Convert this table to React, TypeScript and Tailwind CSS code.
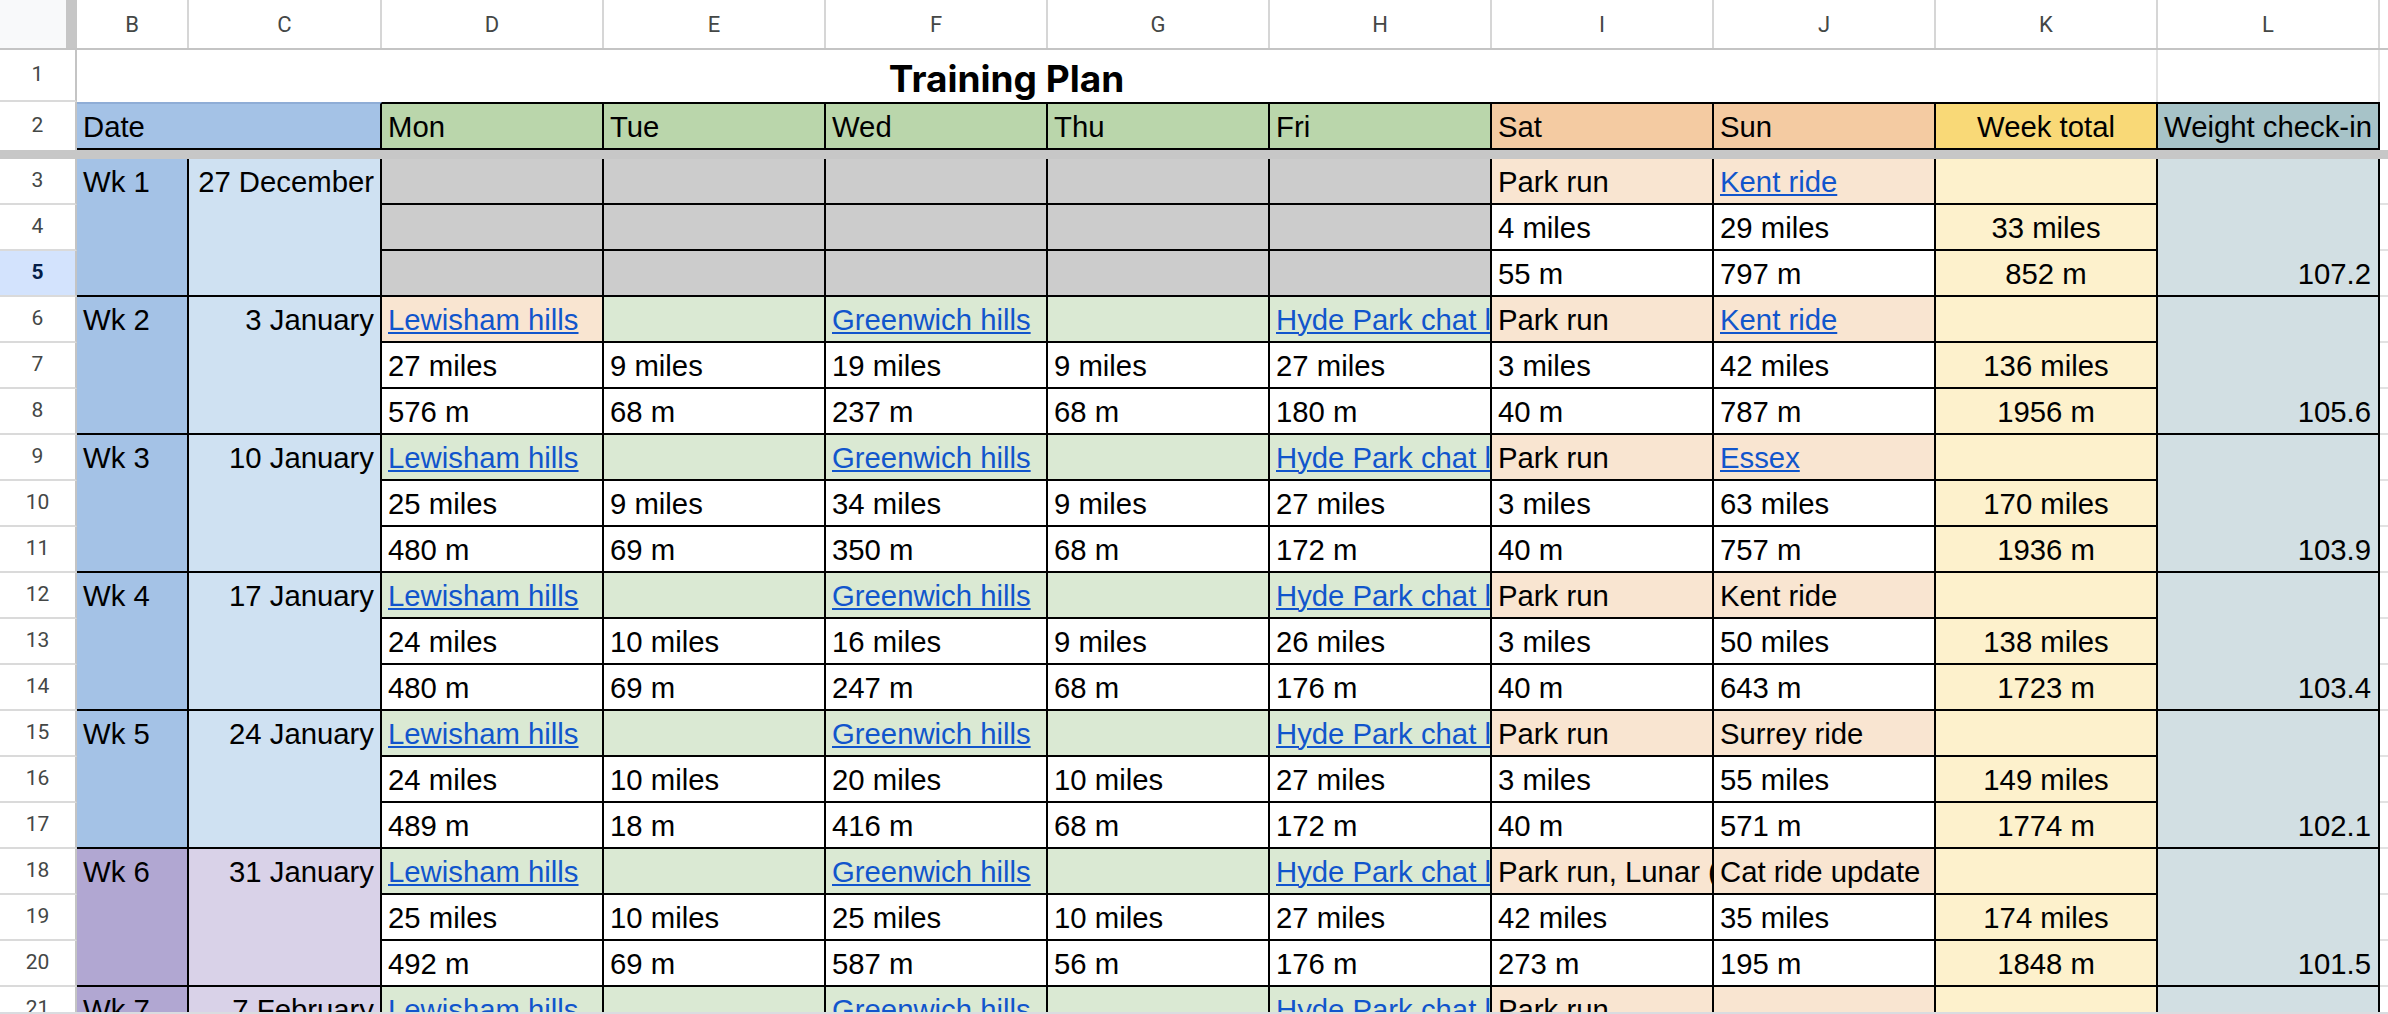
const G = 'bg-[#dae9d3]'
const P = 'bg-[#f9e5d1]'
const W = 'bg-white'
const GR = 'bg-[#cccccc]'

type Act = { t: string; link?: boolean; bg: string }
type Week = {
  row: number
  wk: string
  date: string
  purple?: boolean
  gray?: boolean
  acts: Act[]
  miles: string[]
  metres: string[]
  total: [string, string]
  weight: string
}

const blank = (bg: string): Act => ({ t: '', bg })

const weekdays = (d: Act, f: Act, h: Act): Act[] => [d, blank(G), f, blank(G), h]

const weeks: Week[] = [
  {
    row: 3,
    wk: 'Wk 1',
    date: '27 December',
    gray: true,
    acts: [
      blank(GR), blank(GR), blank(GR), blank(GR), blank(GR),
      { t: 'Park run', bg: P },
      { t: 'Kent ride', link: true, bg: P },
    ],
    miles: ['', '', '', '', '', '4 miles', '29 miles'],
    metres: ['', '', '', '', '', '55 m', '797 m'],
    total: ['33 miles', '852 m'],
    weight: '107.2',
  },
  {
    row: 6,
    wk: 'Wk 2',
    date: '3 January',
    acts: [
      ...weekdays(
        { t: 'Lewisham hills', link: true, bg: P },
        { t: 'Greenwich hills', link: true, bg: G },
        { t: 'Hyde Park chat loop', link: true, bg: G },
      ),
      { t: 'Park run', bg: P },
      { t: 'Kent ride', link: true, bg: P },
    ],
    miles: ['27 miles', '9 miles', '19 miles', '9 miles', '27 miles', '3 miles', '42 miles'],
    metres: ['576 m', '68 m', '237 m', '68 m', '180 m', '40 m', '787 m'],
    total: ['136 miles', '1956 m'],
    weight: '105.6',
  },
  {
    row: 9,
    wk: 'Wk 3',
    date: '10 January',
    acts: [
      ...weekdays(
        { t: 'Lewisham hills', link: true, bg: G },
        { t: 'Greenwich hills', link: true, bg: G },
        { t: 'Hyde Park chat loop', link: true, bg: G },
      ),
      { t: 'Park run', bg: P },
      { t: 'Essex', link: true, bg: P },
    ],
    miles: ['25 miles', '9 miles', '34 miles', '9 miles', '27 miles', '3 miles', '63 miles'],
    metres: ['480 m', '69 m', '350 m', '68 m', '172 m', '40 m', '757 m'],
    total: ['170 miles', '1936 m'],
    weight: '103.9',
  },
  {
    row: 12,
    wk: 'Wk 4',
    date: '17 January',
    acts: [
      ...weekdays(
        { t: 'Lewisham hills', link: true, bg: G },
        { t: 'Greenwich hills', link: true, bg: G },
        { t: 'Hyde Park chat loop', link: true, bg: G },
      ),
      { t: 'Park run', bg: P },
      { t: 'Kent ride', bg: P },
    ],
    miles: ['24 miles', '10 miles', '16 miles', '9 miles', '26 miles', '3 miles', '50 miles'],
    metres: ['480 m', '69 m', '247 m', '68 m', '176 m', '40 m', '643 m'],
    total: ['138 miles', '1723 m'],
    weight: '103.4',
  },
  {
    row: 15,
    wk: 'Wk 5',
    date: '24 January',
    acts: [
      ...weekdays(
        { t: 'Lewisham hills', link: true, bg: G },
        { t: 'Greenwich hills', link: true, bg: G },
        { t: 'Hyde Park chat loop', link: true, bg: G },
      ),
      { t: 'Park run', bg: P },
      { t: 'Surrey ride', bg: P },
    ],
    miles: ['24 miles', '10 miles', '20 miles', '10 miles', '27 miles', '3 miles', '55 miles'],
    metres: ['489 m', '18 m', '416 m', '68 m', '172 m', '40 m', '571 m'],
    total: ['149 miles', '1774 m'],
    weight: '102.1',
  },
  {
    row: 18,
    wk: 'Wk 6',
    date: '31 January',
    purple: true,
    acts: [
      ...weekdays(
        { t: 'Lewisham hills', link: true, bg: G },
        { t: 'Greenwich hills', link: true, bg: G },
        { t: 'Hyde Park chat loop', link: true, bg: G },
      ),
      { t: 'Park run, Lunar (New Year)', bg: P },
      { t: 'Cat ride update', bg: P },
    ],
    miles: ['25 miles', '10 miles', '25 miles', '10 miles', '27 miles', '42 miles', '35 miles'],
    metres: ['492 m', '69 m', '587 m', '56 m', '176 m', '273 m', '195 m'],
    total: ['174 miles', '1848 m'],
    weight: '101.5',
  },
  {
    row: 21,
    wk: 'Wk 7',
    date: '7 February',
    purple: true,
    acts: [
      ...weekdays(
        { t: 'Lewisham hills', link: true, bg: G },
        { t: 'Greenwich hills', link: true, bg: G },
        { t: 'Hyde Park chat loop', link: true, bg: G },
      ),
      { t: 'Park run', bg: P },
      blank(P),
    ],
    miles: ['24 miles', '10 miles', '22 miles', '10 miles', '27 miles', '3 miles', '40 miles'],
    metres: ['480 m', '69 m', '410 m', '68 m', '176 m', '40 m', '600 m'],
    total: ['156 miles', '1843 m'],
    weight: '101.0',
  },
]

const letters = ['D', 'E', 'F', 'G', 'H', 'I', 'J', 'K', 'L']
const days = ['Mon', 'Tue', 'Wed', 'Thu', 'Fri']

const cell = 'w-[222px] h-[46px] shrink-0 border-r-2 border-b-2 border-black px-[6px] leading-[45px] overflow-hidden whitespace-nowrap'

function RowNum({ n, h = 'h-[46px]' }: { n: number; h?: string }) {
  const selected = n === 5
  return (
    <div
      className={`${h} w-[77px] shrink-0 flex items-center justify-center border-r-2 border-r-[#c4c4c4] border-b-2 border-b-[#dadada] font-['Roboto',sans-serif] text-[21px] ${
        selected ? 'bg-[#d3e3fd] text-[#041e49] font-bold' : 'bg-white text-[#444746]'
      }`}
    >
      {n}
    </div>
  )
}

function Text({ a }: { a: Act }) {
  if (!a.link) return <>{a.t}</>
  return <span className="text-[#1155cc] underline decoration-2 underline-offset-[2px]">{a.t}</span>
}

function WeekBlock({ w }: { w: Week }) {
  const lower = (i: number) => (w.gray && i < 5 ? GR : W)
  return (
    <div className="flex shrink-0">
      <div className="flex flex-col">
        <RowNum n={w.row} />
        <RowNum n={w.row + 1} />
        <RowNum n={w.row + 2} />
      </div>
      <div
        className={`w-[112px] h-[138px] shrink-0 border-r-2 border-b-2 border-black px-[6px] leading-[45px] ${
          w.purple ? 'bg-[#b1a7d2]' : 'bg-[#a4c2e6]'
        }`}
      >
        {w.wk}
      </div>
      <div
        className={`w-[193px] h-[138px] shrink-0 border-r-2 border-b-2 border-black pr-[6px] text-right leading-[45px] ${
          w.purple ? 'bg-[#d9d2e8]' : 'bg-[#cfe1f2]'
        }`}
      >
        {w.date}
      </div>
      <div className="flex flex-col shrink-0">
        <div className="flex">
          {w.acts.map((a, i) => (
            <div key={i} className={`${cell} ${a.bg}`}>
              <Text a={a} />
            </div>
          ))}
          <div className={`${cell} bg-[#fdf1cc]`} />
        </div>
        <div className="flex">
          {w.miles.map((m, i) => (
            <div key={i} className={`${cell} ${lower(i)}`}>{m}</div>
          ))}
          <div className={`${cell} bg-[#fdf1cc] text-center`}>{w.total[0]}</div>
        </div>
        <div className="flex">
          {w.metres.map((m, i) => (
            <div key={i} className={`${cell} ${lower(i)}`}>{m}</div>
          ))}
          <div className={`${cell} bg-[#fdf1cc] text-center`}>{w.total[1]}</div>
        </div>
      </div>
      <div className="w-[222px] h-[138px] shrink-0 border-r-2 border-b-2 border-black bg-[#d2dfe3] flex items-end justify-end pr-[7px]">
        <span className="leading-[42px]">{w.weight}</span>
      </div>
      <div className="flex-1 flex flex-col">
        <div className="h-[46px] border-b-2 border-[#e2e2e2]" />
        <div className="h-[46px] border-b-2 border-[#e2e2e2]" />
        <div className="h-[46px] border-b-2 border-[#e2e2e2]" />
      </div>
    </div>
  )
}

export default function App() {
  return (
    <div className="w-[2388px] h-[1014px] overflow-hidden bg-white flex flex-col font-['Liberation_Sans',Arial,sans-serif] text-[29.3px] text-black">
      {/* column letters */}
      <div className="flex h-[50px] shrink-0 border-b-2 border-[#c4c4c4] font-['Roboto',sans-serif] text-[22px] text-[#444746]">
        <div className="w-[66px] bg-[#f8f9fa]" />
        <div className="w-[11px] bg-[#c6c6c6]" />
        <div className="w-[112px] flex items-center justify-center border-r-2 border-[#d6d6d6]">B</div>
        <div className="w-[193px] flex items-center justify-center border-r-2 border-[#d6d6d6]">C</div>
        {letters.map((l) => (
          <div key={l} className="w-[222px] flex items-center justify-center border-r-2 border-[#d6d6d6]">
            {l}
          </div>
        ))}
        <div className="flex-1" />
      </div>

      {/* row 1 title */}
      <div className="flex h-[52px] shrink-0">
        <RowNum n={1} h="h-[52px]" />
        <div className="w-[1859px] shrink-0 flex items-end justify-center pb-[5px]">
          <span className="font-['Inter',sans-serif] font-bold text-[37px] leading-none">Training Plan</span>
        </div>
        <div className="w-[222px] border-r-2 border-[#e2e2e2]" />
        <div className="w-[222px] border-r-2 border-[#e2e2e2]" />
        <div className="flex-1" />
      </div>

      {/* row 2 headers */}
      <div className="flex h-[48px] shrink-0">
        <div className="w-[77px] h-[48px] shrink-0 flex items-center justify-center border-r-2 border-[#c4c4c4] font-['Roboto',sans-serif] text-[21px] text-[#444746]">
          2
        </div>
        <div className="w-[305px] shrink-0 border-t-2 border-t-[#8fadd6] border-b-2 border-b-black border-r-2 border-r-black bg-[#a4c2e6] px-[6px] leading-[45px]">
          Date
        </div>
        {days.map((d) => (
          <div key={d} className="w-[222px] shrink-0 border-2 border-l-0 border-black bg-[#bad6ab] px-[6px] leading-[45px]">
            {d}
          </div>
        ))}
        <div className="w-[222px] shrink-0 border-2 border-l-0 border-black bg-[#f4cba2] px-[6px] leading-[45px]">Sat</div>
        <div className="w-[222px] shrink-0 border-2 border-l-0 border-black bg-[#f4cba2] px-[6px] leading-[45px]">Sun</div>
        <div className="w-[222px] shrink-0 border-2 border-l-0 border-black bg-[#f9d977] text-center leading-[45px]">Week total</div>
        <div className="w-[222px] shrink-0 border-2 border-l-0 border-black bg-[#a7c3c8] text-center leading-[45px] whitespace-nowrap overflow-hidden">
          Weight check-in
        </div>
        <div className="flex-1" />
      </div>

      {/* frozen divider */}
      <div className="h-[9px] shrink-0 bg-[#c7c7c7]" />

      <div className="flex-1 overflow-hidden flex flex-col">
        {weeks.map((w) => (
          <WeekBlock key={w.row} w={w} />
        ))}
      </div>
      <div className="h-[2px] shrink-0 bg-[#dadce0]" />
    </div>
  )
}
